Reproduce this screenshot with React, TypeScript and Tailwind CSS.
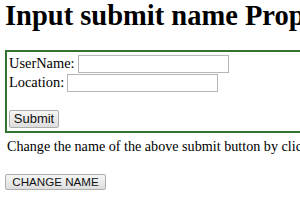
export default function App() {
  return (
    <div className="w-[300px] h-[210px] overflow-hidden bg-white text-black font-['Liberation_Serif',serif]">
      <h1 className="m-0 pl-[5px] text-[28.5px] leading-[31px] font-bold whitespace-nowrap">
        Input submit name Property
      </h1>

      <form
        className="mt-[19px] ml-[5px] w-[320px] border-2 border-[#327332] px-[2px] pt-[2px] pb-[1px] text-[14.4px]"
        onSubmit={(e) => e.preventDefault()}
      >
        <div className="flex items-center h-[19px] leading-[19px]">
          <span>UserName:</span>
          <input
            type="text"
            className="ml-[3px] w-[151px] h-[18px] border border-[#b5b5b5] bg-white outline-none"
          />
        </div>
        <div className="flex items-center h-[19px] leading-[19px]">
          <span>Location:</span>
          <input
            type="text"
            className="ml-[3px] w-[151px] h-[18px] border border-[#b5b5b5] bg-white outline-none"
          />
        </div>
        <div className="h-[16px]" />
        <button
          type="submit"
          className="w-[50px] h-[18px] border border-[#adadad] rounded-[2px] bg-gradient-to-b from-[#f6f6f6] to-[#dedede] font-['Liberation_Sans',sans-serif] text-[13px] leading-[16px] text-[#111]"
        >
          Submit
        </button>
      </form>

      <p className="mt-[5px] pl-[7px] text-[14.15px] leading-[17px] whitespace-nowrap">
        Change the name of the above submit button by clicking the button below.
      </p>

      <button
        type="button"
        className="mt-[19px] ml-[5px] w-[101px] h-[16px] border border-[#adadad] rounded-[2px] bg-gradient-to-b from-[#f6f6f6] to-[#dedede] font-['Liberation_Sans',sans-serif] text-[11.6px] leading-[14px] text-[#111]"
      >
        CHANGE NAME
      </button>
    </div>
  );
}
